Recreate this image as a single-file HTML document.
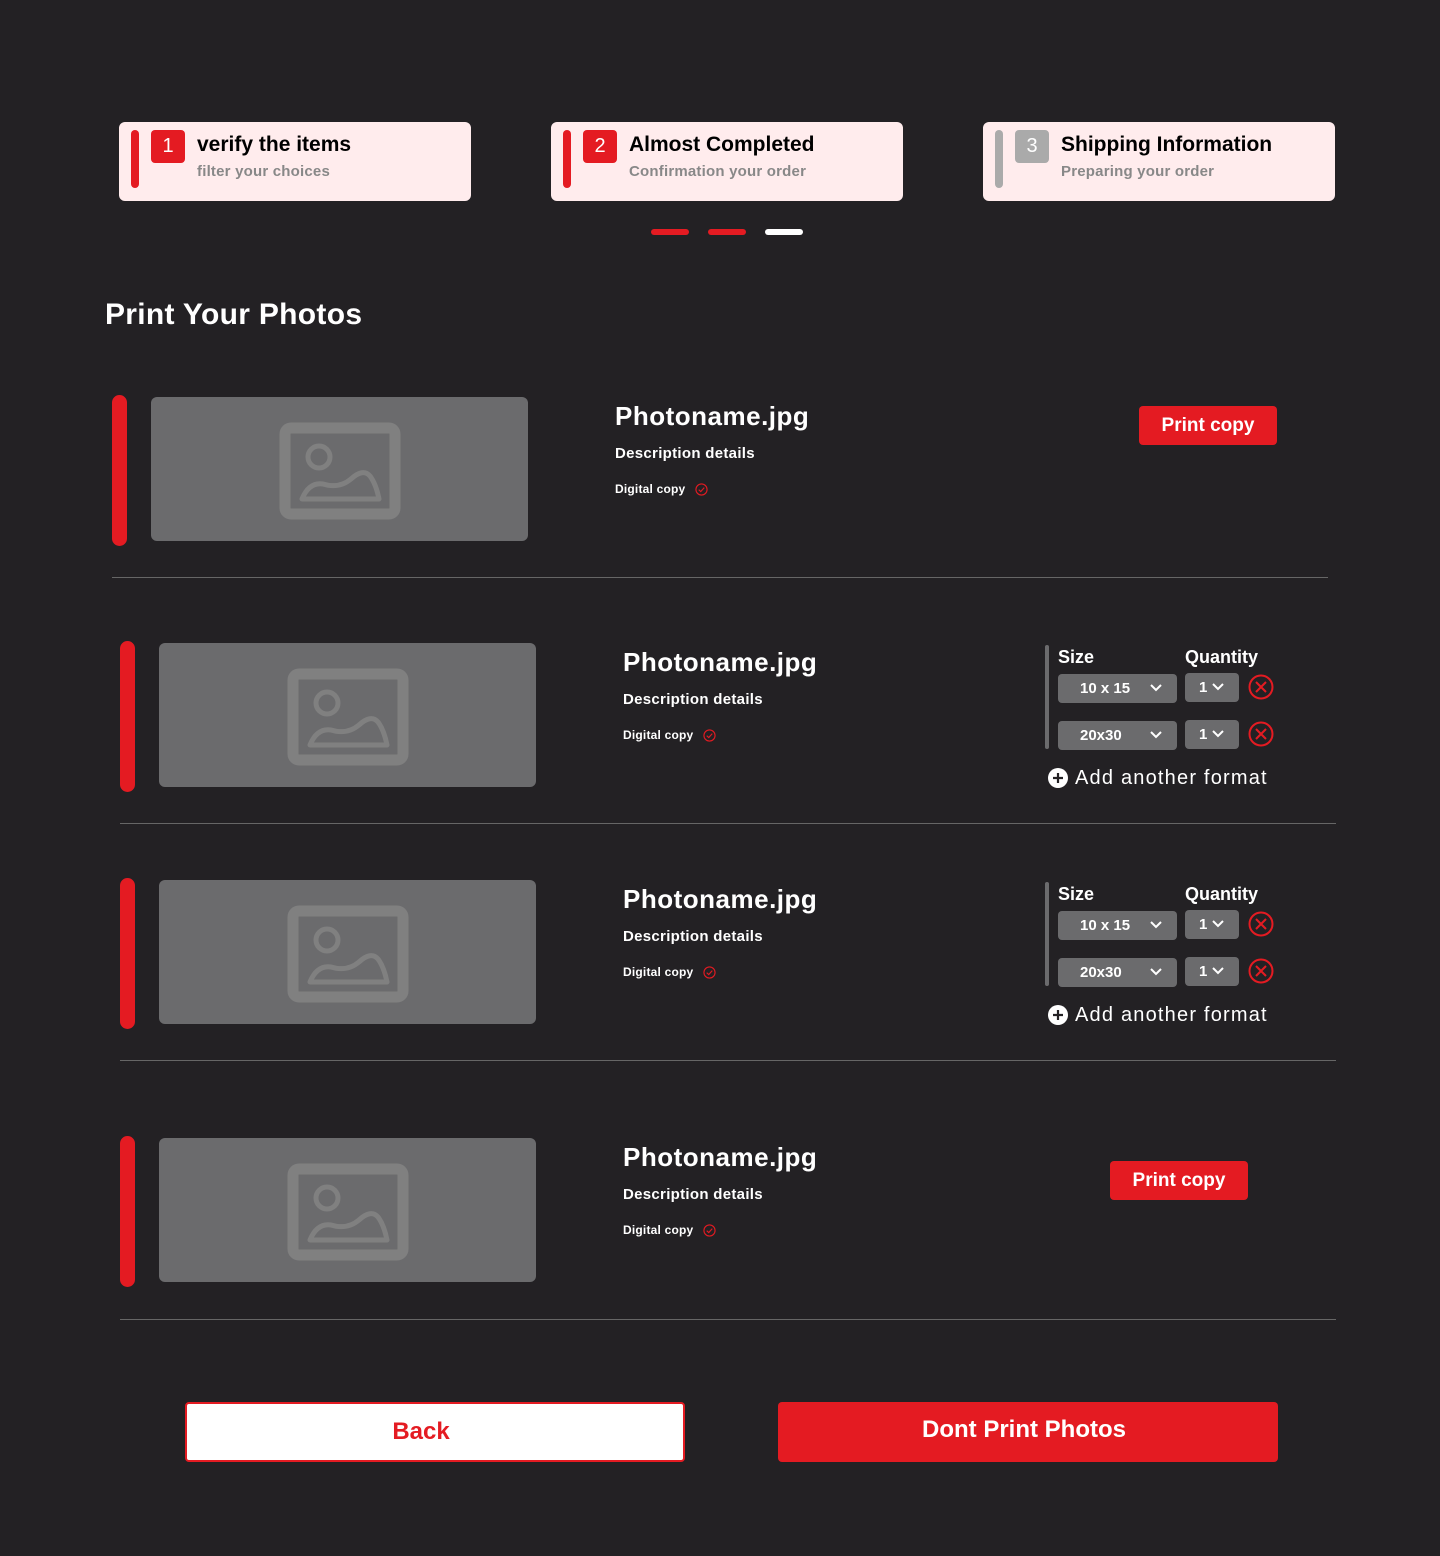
<!DOCTYPE html>
<html><head><meta charset="utf-8"><style>
*{margin:0;padding:0;box-sizing:border-box}
body{width:1440px;height:1556px;background:#232124;font-family:"Liberation Sans",sans-serif;position:relative;overflow:hidden;color:#fff}
.a{position:absolute}
.card{position:absolute;top:122px;width:352px;height:79px;background:#ffeced;border-radius:6px}
.card .bar{position:absolute;left:12px;top:8px;width:8px;height:58px;border-radius:4px;background:#e41b22}
.card .num{position:absolute;left:32px;top:8px;width:34px;height:33px;border-radius:4px;background:#e41b22;color:#fff;font-size:20px;text-align:center;line-height:33px}
.card .t{position:absolute;left:78px;top:11px;font-size:21px;font-weight:bold;color:#000;white-space:nowrap}
.card .s{position:absolute;left:78px;top:41px;font-size:15px;font-weight:bold;color:#888;white-space:nowrap;letter-spacing:0.2px}
.dot{position:absolute;top:229px;width:38px;height:6px;border-radius:3px;background:#e41b22}
.rbar{position:absolute;width:15px;height:151px;border-radius:8px;background:#e41b22}
.img{position:absolute;width:377px;height:144px;border-radius:6px;background:#6b6b6d}
.img svg{position:absolute;left:128px;top:25px}
.title{position:absolute;font-size:26px;font-weight:bold;white-space:nowrap;letter-spacing:0.5px}
.desc{position:absolute;font-size:15px;font-weight:bold;white-space:nowrap;letter-spacing:0.3px}
.dig{position:absolute;font-size:12px;font-weight:bold;white-space:nowrap;letter-spacing:0.2px}
.dig svg{position:absolute;left:80px;top:1px}
.btn{position:absolute;width:138px;height:39px;background:#e41b22;border-radius:4px;font-size:19px;font-weight:bold;text-align:center;line-height:39px}
.line{position:absolute;height:1px;background:#666}
.lbl{position:absolute;font-size:18px;font-weight:bold}
.sel{position:absolute;height:29px;background:#6b6b6d;border-radius:4px;font-size:15px;font-weight:bold;line-height:29px}
.vbar{position:absolute;width:4px;height:104px;background:#6b6b6d;border-radius:2px}
.add{position:absolute;font-size:20px;white-space:nowrap;letter-spacing:1.2px}
</style></head><body>

<div class="card" style="left:119px"><div class="bar"></div><div class="num">1</div><div class="t">verify the items</div><div class="s">filter your choices</div></div>
<div class="card" style="left:551px"><div class="bar"></div><div class="num">2</div><div class="t">Almost Completed</div><div class="s">Confirmation your order</div></div>
<div class="card" style="left:983px"><div class="bar" style="background:#aaa"></div><div class="num" style="background:#aaa">3</div><div class="t">Shipping Information</div><div class="s">Preparing your order</div></div>
<div class="dot" style="left:651px"></div><div class="dot" style="left:708px"></div><div class="dot" style="left:765px;background:#fff"></div>

<div class="a" style="left:105px;top:298px;font-size:30px;font-weight:bold;letter-spacing:0.3px">Print Your Photos</div>

<!-- row 1 -->
<div class="rbar" style="left:112px;top:395px"></div>
<div class="img" style="left:151px;top:397px"><svg width="122" height="98" viewBox="0 0 122 98"><rect x="6" y="6" width="110" height="86" rx="6" fill="none" stroke="#808080" stroke-width="11"/><circle cx="40" cy="35" r="11" fill="none" stroke="#808080" stroke-width="5"/><path d="M23 77 Q30 60 44 62 Q60 67 72 57 Q84 46 91 54 Q97 62 100 77 Z" fill="none" stroke="#808080" stroke-width="5" stroke-linejoin="round"/></svg></div>
<div class="title" style="left:615px;top:401px">Photoname.jpg</div>
<div class="desc" style="left:615px;top:445px">Description details</div>
<div class="dig" style="left:615px;top:482px">Digital copy<svg width="13" height="13" viewBox="0 0 14 14"><circle cx="7" cy="7" r="6" fill="none" stroke="#e41b22" stroke-width="1.2"/><path d="M4 7.2 L6.2 9.2 L10 5" fill="none" stroke="#e41b22" stroke-width="1.2"/></svg></div>
<div class="btn" style="left:1139px;top:406px">Print copy</div>
<div class="line" style="left:112px;top:577px;width:1216px"></div>

<!-- row 2 -->
<div class="rbar" style="left:120px;top:641px"></div>
<div class="img" style="left:159px;top:643px"><svg width="122" height="98" viewBox="0 0 122 98"><rect x="6" y="6" width="110" height="86" rx="6" fill="none" stroke="#808080" stroke-width="11"/><circle cx="40" cy="35" r="11" fill="none" stroke="#808080" stroke-width="5"/><path d="M23 77 Q30 60 44 62 Q60 67 72 57 Q84 46 91 54 Q97 62 100 77 Z" fill="none" stroke="#808080" stroke-width="5" stroke-linejoin="round"/></svg></div>
<div class="title" style="left:623px;top:647px">Photoname.jpg</div>
<div class="desc" style="left:623px;top:691px">Description details</div>
<div class="dig" style="left:623px;top:728px">Digital copy<svg width="13" height="13" viewBox="0 0 14 14"><circle cx="7" cy="7" r="6" fill="none" stroke="#e41b22" stroke-width="1.2"/><path d="M4 7.2 L6.2 9.2 L10 5" fill="none" stroke="#e41b22" stroke-width="1.2"/></svg></div>
<div class="vbar" style="left:1045px;top:645px"></div>
<div class="lbl" style="left:1058px;top:647px">Size</div>
<div class="lbl" style="left:1185px;top:647px">Quantity</div>
<div class="sel" style="left:1058px;top:674px;width:119px;padding-left:22px">10 x 15<svg class="a" style="left:92px;top:10px" width="12" height="8" viewBox="0 0 12 8"><path d="M1 1 L6 6 L11 1" fill="none" stroke="#fff" stroke-width="2"/></svg></div>
<div class="sel" style="left:1185px;top:673px;width:54px;padding-left:14px">1<svg class="a" style="left:27px;top:10px" width="12" height="8" viewBox="0 0 12 8"><path d="M1 1 L6 6 L11 1" fill="none" stroke="#fff" stroke-width="2"/></svg></div>
<svg class="a" style="left:1248px;top:674px" width="26" height="26" viewBox="0 0 26 26"><circle cx="13" cy="13" r="11.5" fill="none" stroke="#e41b22" stroke-width="2"/><path d="M8 8 L18 18 M18 8 L8 18" stroke="#e41b22" stroke-width="2"/></svg>
<div class="sel" style="left:1058px;top:721px;width:119px;padding-left:22px">20x30<svg class="a" style="left:92px;top:10px" width="12" height="8" viewBox="0 0 12 8"><path d="M1 1 L6 6 L11 1" fill="none" stroke="#fff" stroke-width="2"/></svg></div>
<div class="sel" style="left:1185px;top:720px;width:54px;padding-left:14px">1<svg class="a" style="left:27px;top:10px" width="12" height="8" viewBox="0 0 12 8"><path d="M1 1 L6 6 L11 1" fill="none" stroke="#fff" stroke-width="2"/></svg></div>
<svg class="a" style="left:1248px;top:721px" width="26" height="26" viewBox="0 0 26 26"><circle cx="13" cy="13" r="11.5" fill="none" stroke="#e41b22" stroke-width="2"/><path d="M8 8 L18 18 M18 8 L8 18" stroke="#e41b22" stroke-width="2"/></svg>
<svg class="a" style="left:1048px;top:768px" width="20" height="20" viewBox="0 0 20 20"><circle cx="10" cy="10" r="10" fill="#fff"/><path d="M10 5 V15 M5 10 H15" stroke="#232124" stroke-width="2.2"/></svg>
<div class="add" style="left:1075px;top:767px">Add another format</div>
<div class="line" style="left:120px;top:823px;width:1216px"></div>

<!-- row 3 -->
<div class="rbar" style="left:120px;top:878px"></div>
<div class="img" style="left:159px;top:880px"><svg width="122" height="98" viewBox="0 0 122 98"><rect x="6" y="6" width="110" height="86" rx="6" fill="none" stroke="#808080" stroke-width="11"/><circle cx="40" cy="35" r="11" fill="none" stroke="#808080" stroke-width="5"/><path d="M23 77 Q30 60 44 62 Q60 67 72 57 Q84 46 91 54 Q97 62 100 77 Z" fill="none" stroke="#808080" stroke-width="5" stroke-linejoin="round"/></svg></div>
<div class="title" style="left:623px;top:884px">Photoname.jpg</div>
<div class="desc" style="left:623px;top:928px">Description details</div>
<div class="dig" style="left:623px;top:965px">Digital copy<svg width="13" height="13" viewBox="0 0 14 14"><circle cx="7" cy="7" r="6" fill="none" stroke="#e41b22" stroke-width="1.2"/><path d="M4 7.2 L6.2 9.2 L10 5" fill="none" stroke="#e41b22" stroke-width="1.2"/></svg></div>
<div class="vbar" style="left:1045px;top:882px"></div>
<div class="lbl" style="left:1058px;top:884px">Size</div>
<div class="lbl" style="left:1185px;top:884px">Quantity</div>
<div class="sel" style="left:1058px;top:911px;width:119px;padding-left:22px">10 x 15<svg class="a" style="left:92px;top:10px" width="12" height="8" viewBox="0 0 12 8"><path d="M1 1 L6 6 L11 1" fill="none" stroke="#fff" stroke-width="2"/></svg></div>
<div class="sel" style="left:1185px;top:910px;width:54px;padding-left:14px">1<svg class="a" style="left:27px;top:10px" width="12" height="8" viewBox="0 0 12 8"><path d="M1 1 L6 6 L11 1" fill="none" stroke="#fff" stroke-width="2"/></svg></div>
<svg class="a" style="left:1248px;top:911px" width="26" height="26" viewBox="0 0 26 26"><circle cx="13" cy="13" r="11.5" fill="none" stroke="#e41b22" stroke-width="2"/><path d="M8 8 L18 18 M18 8 L8 18" stroke="#e41b22" stroke-width="2"/></svg>
<div class="sel" style="left:1058px;top:958px;width:119px;padding-left:22px">20x30<svg class="a" style="left:92px;top:10px" width="12" height="8" viewBox="0 0 12 8"><path d="M1 1 L6 6 L11 1" fill="none" stroke="#fff" stroke-width="2"/></svg></div>
<div class="sel" style="left:1185px;top:957px;width:54px;padding-left:14px">1<svg class="a" style="left:27px;top:10px" width="12" height="8" viewBox="0 0 12 8"><path d="M1 1 L6 6 L11 1" fill="none" stroke="#fff" stroke-width="2"/></svg></div>
<svg class="a" style="left:1248px;top:958px" width="26" height="26" viewBox="0 0 26 26"><circle cx="13" cy="13" r="11.5" fill="none" stroke="#e41b22" stroke-width="2"/><path d="M8 8 L18 18 M18 8 L8 18" stroke="#e41b22" stroke-width="2"/></svg>
<svg class="a" style="left:1048px;top:1005px" width="20" height="20" viewBox="0 0 20 20"><circle cx="10" cy="10" r="10" fill="#fff"/><path d="M10 5 V15 M5 10 H15" stroke="#232124" stroke-width="2.2"/></svg>
<div class="add" style="left:1075px;top:1004px">Add another format</div>
<div class="line" style="left:120px;top:1060px;width:1216px"></div>

<!-- row 4 -->
<div class="rbar" style="left:120px;top:1136px"></div>
<div class="img" style="left:159px;top:1138px"><svg width="122" height="98" viewBox="0 0 122 98"><rect x="6" y="6" width="110" height="86" rx="6" fill="none" stroke="#808080" stroke-width="11"/><circle cx="40" cy="35" r="11" fill="none" stroke="#808080" stroke-width="5"/><path d="M23 77 Q30 60 44 62 Q60 67 72 57 Q84 46 91 54 Q97 62 100 77 Z" fill="none" stroke="#808080" stroke-width="5" stroke-linejoin="round"/></svg></div>
<div class="title" style="left:623px;top:1142px">Photoname.jpg</div>
<div class="desc" style="left:623px;top:1186px">Description details</div>
<div class="dig" style="left:623px;top:1223px">Digital copy<svg width="13" height="13" viewBox="0 0 14 14"><circle cx="7" cy="7" r="6" fill="none" stroke="#e41b22" stroke-width="1.2"/><path d="M4 7.2 L6.2 9.2 L10 5" fill="none" stroke="#e41b22" stroke-width="1.2"/></svg></div>
<div class="btn" style="left:1110px;top:1161px">Print copy</div>
<div class="line" style="left:120px;top:1319px;width:1216px"></div>

<div class="a" style="left:185px;top:1402px;width:500px;height:60px;background:#fff;border:2px solid #e41b22;border-radius:4px;color:#e41b22;font-size:24px;font-weight:bold;text-align:center;line-height:56px;padding-right:28px">Back</div>
<div class="a" style="left:778px;top:1402px;width:500px;height:60px;background:#e41b22;border-radius:4px;color:#fff;font-size:24px;font-weight:bold;text-align:center;line-height:56px;padding-right:8px">Dont Print Photos</div>
</body></html>
